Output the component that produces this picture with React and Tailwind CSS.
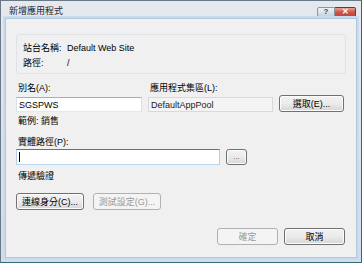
export default function App() {
  const btn =
    "flex items-center justify-center rounded-[3px] border border-[#707070] bg-gradient-to-b from-[#f2f2f2] via-[#ebebeb] to-[#d6d6d6] text-[#000] shadow-[inset_0_0_0_1px_#fcfcfc]";
  const btnDis =
    "flex items-center justify-center rounded-[3px] border border-[#adb2b5] bg-[#f4f4f4] text-[#9a9a9a]";
  return (
    <div
      className="w-[362px] h-[263px] flex flex-col overflow-hidden border-l border-t border-[#6b7886] border-r border-b border-r-[#2f6a77] border-b-[#2f6a77] bg-gradient-to-b from-[#e4e9ef] to-[#d3dde8] text-[9px] leading-[14px] text-[#000]"
      style={{ fontFamily: '"Liberation Sans", "Noto Sans CJK TC", sans-serif' }}
    >
      {/* title bar */}
      <div className="h-[17px] flex items-center shrink-0">
        <span className="ml-[8px] mt-[3px] text-[9px] text-[#1e2630]">新增應用程式</span>
        <div className="ml-auto mr-[5px] mt-[5px] flex h-[10px]">
          <div className="w-[18px] h-[10px] rounded-l-[2px] border border-[#8a97a4] bg-gradient-to-b from-[#eef2f6] to-[#c9d3de] flex items-center justify-center text-[8px] leading-none text-[#3c4a58] font-bold">
            ?
          </div>
          <div className="w-[21px] h-[10px] rounded-r-[2px] border border-l-0 border-[#7e2e2a] bg-gradient-to-b from-[#e8a293] via-[#d0564a] to-[#c2443a] flex items-center justify-center text-[8px] leading-none text-white font-bold">
            ✕
          </div>
        </div>
      </div>
      {/* client */}
      <div className="flex-1 mx-[4px] mb-[4px] border border-[#b4c6d9] shadow-[0_0_0_2px_#c9dbee] bg-[#f0f0f0] flex flex-col pl-[10px] pr-[10px]">
        <div className="mt-[15px] h-[40px] w-[330px] rounded-[3px] border border-[#dde3e8] pl-[6px] pt-[6px] leading-[15px]">
          <div className="flex">
            <span className="w-[44px]">站台名稱:</span>
            <span>Default Web Site</span>
          </div>
          <div className="flex">
            <span className="w-[44px]">路徑:</span>
            <span>/</span>
          </div>
        </div>
        <div className="mt-[7px] flex">
          <div className="w-[126px] flex flex-col">
            <span className="pl-[2px]">別名(A):</span>
            <div className="mt-[2px] h-[15px] border border-[#abadb3] border-l-[#dbdfe6] border-r-[#dbdfe6] border-b-[#e3e9ef] bg-white pl-[2px] flex items-center">
              SGSPWS
            </div>
          </div>
          <div className="ml-[6px] w-[125px] flex flex-col">
            <span className="pl-[2px]">應用程式集區(L):</span>
            <div className="mt-[2px] h-[15px] border border-[#d9d9d9] bg-[#f4f4f4] pl-[2px] flex items-center text-[#222]">
              DefaultAppPool
            </div>
          </div>
          <div className="ml-[6px] flex flex-col justify-end">
            <div className={btn + " w-[65px] h-[17px]"}>選取(E)...</div>
          </div>
        </div>
        <div className="mt-[2px] pl-[2px]">範例: 銷售</div>
        <div className="mt-[7px] pl-[2px]">實體路徑(P):</div>
        <div className="flex items-start">
          <div className="w-[204px] h-[16px] border border-[#3d7bad] border-l-[#b5cfe7] border-r-[#b5cfe7] border-b-[#b7d9ed] bg-white flex items-center pl-[2px]">
            <div className="w-px h-[10px] bg-black" />
          </div>
          <div className={btn + " ml-[6px] w-[21px] h-[16px] text-[#666] text-[8px]"}>...</div>
        </div>
        <div className="mt-[4px] pl-[2px]">傳遞驗證</div>
        <div className="mt-[10px] flex gap-[9px]">
          <div className={btn + " w-[68px] h-[17px]"}>連線身分(C)...</div>
          <div className={btnDis + " w-[68px] h-[17px]"}>測試設定(G)...</div>
        </div>
        <div className="mt-[18px] flex justify-end gap-[6px] pr-[1px]">
          <div className={btnDis + " w-[61px] h-[17px]"}>確定</div>
          <div className={btn + " w-[61px] h-[17px]"}>取消</div>
        </div>
      </div>
    </div>
  );
}
